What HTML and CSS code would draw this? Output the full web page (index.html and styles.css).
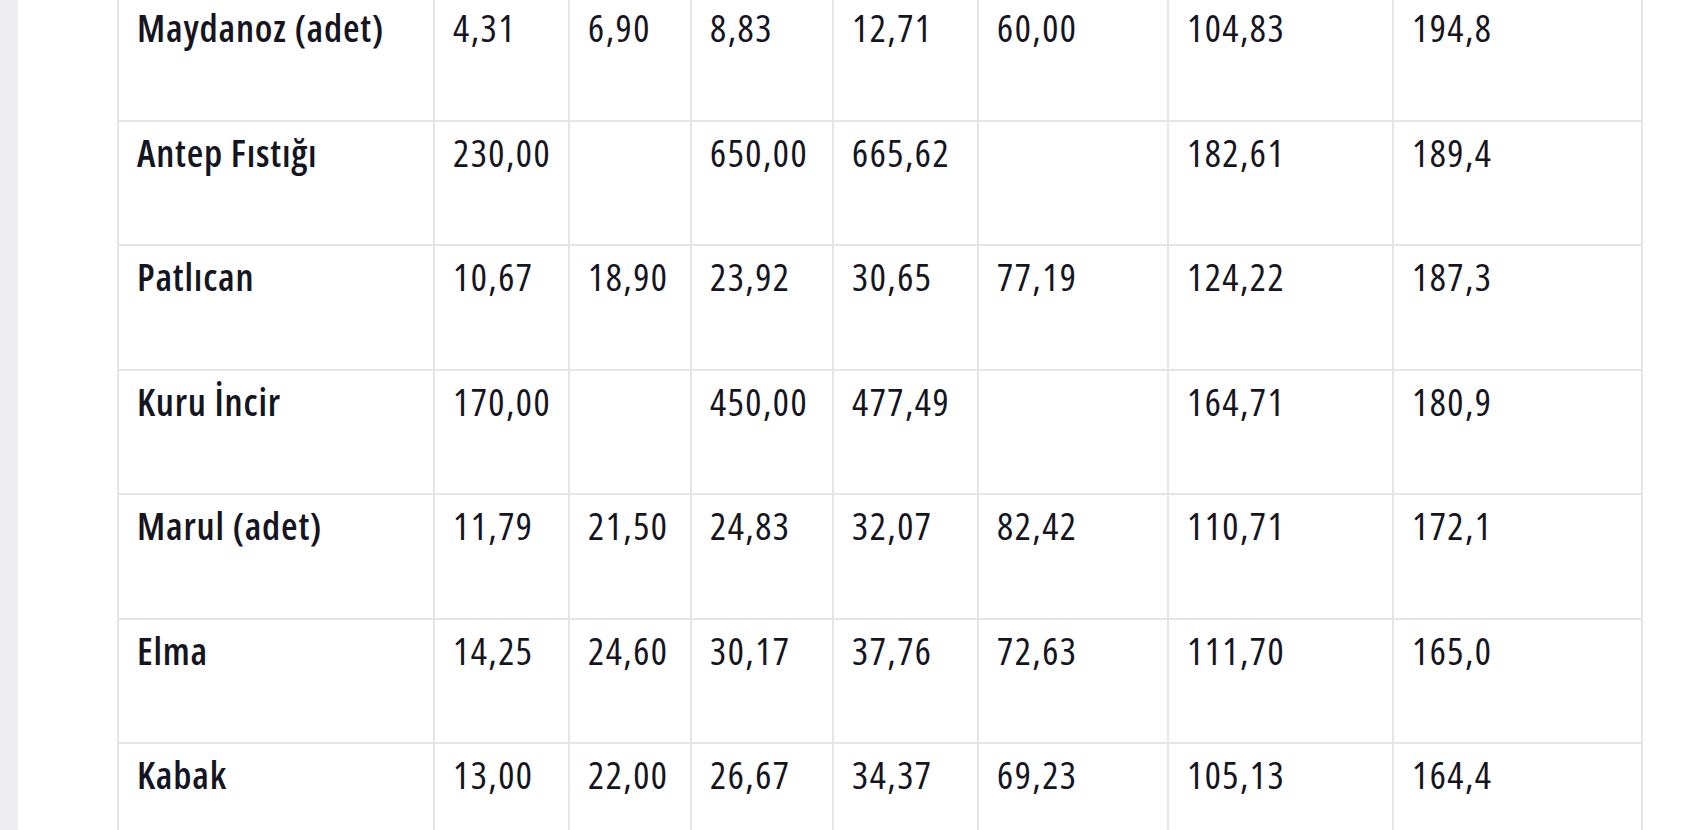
FILE: index.html
```html
<!DOCTYPE html>
<html lang="tr">
<head>
<meta charset="utf-8">
<title>Fiyatlar</title>
<link rel="stylesheet" href="styles.css">
</head>
<body>
<div class="page">
  <div class="side"></div>
  <main class="content">
    <table class="prices">
      <colgroup>
        <col class="c-name"><col class="c1"><col class="c2"><col class="c3"><col class="c4"><col class="c5"><col class="c6"><col class="c7">
      </colgroup>
      <tbody>
        <tr><th>Maydanoz (adet)</th><td>4,31</td><td>6,90</td><td>8,83</td><td>12,71</td><td>60,00</td><td>104,83</td><td>194,8</td></tr>
        <tr><th>Antep Fıstığı</th><td>230,00</td><td></td><td>650,00</td><td>665,62</td><td></td><td>182,61</td><td>189,4</td></tr>
        <tr><th>Patlıcan</th><td>10,67</td><td>18,90</td><td>23,92</td><td>30,65</td><td>77,19</td><td>124,22</td><td>187,3</td></tr>
        <tr><th>Kuru İncir</th><td>170,00</td><td></td><td>450,00</td><td>477,49</td><td></td><td>164,71</td><td>180,9</td></tr>
        <tr><th>Marul (adet)</th><td>11,79</td><td>21,50</td><td>24,83</td><td>32,07</td><td>82,42</td><td>110,71</td><td>172,1</td></tr>
        <tr><th>Elma</th><td>14,25</td><td>24,60</td><td>30,17</td><td>37,76</td><td>72,63</td><td>111,70</td><td>165,0</td></tr>
        <tr><th>Kabak</th><td>13,00</td><td>22,00</td><td>26,67</td><td>34,37</td><td>69,23</td><td>105,13</td><td>164,4</td></tr>
      </tbody>
    </table>
  </main>
</div>
</body>
</html>
```

FILE: styles.css
```css
html, body {
  margin: 0;
  padding: 0;
  background: #ffffff;
  overflow: hidden;
}

.page {
  display: flex;
  height: 830px;
  overflow: hidden;
}

.side {
  flex: 0 0 18px;
  background: #eeeef1;
}

.content {
  flex: 1;
  background: #ffffff;
  padding-left: 99px;
}

.prices {
  margin-top: -5px;
  border-collapse: collapse;
  table-layout: fixed;
  width: 1524px;
  font-family: "Open Sans", "DejaVu Sans", sans-serif;
  font-stretch: 75%;
  font-size: 38px;
  line-height: 1.2;
  color: #15151f;
  border-left: 2px solid #d9d9df;
  border-right: 2px solid #d9d9df;
}

.c-name { width: 316px; }
.c1 { width: 135px; }
.c2 { width: 122px; }
.c3 { width: 142px; }
.c4 { width: 145px; }
.c5 { width: 190px; }
.c6 { width: 225px; }
.c7 { width: 249px; }

.prices tr {
  height: 124.5px;
}

.prices th,
.prices td {
  vertical-align: top;
  text-align: left;
  padding: 8px 18px 0 18px;
  border: 2px solid #e4e4ea;
  white-space: nowrap;
  overflow: hidden;
}

.prices th {
  font-weight: 600;
  letter-spacing: 0.8px;
}

.prices td {
  font-weight: 400;
  letter-spacing: 1.5px;
}
```
